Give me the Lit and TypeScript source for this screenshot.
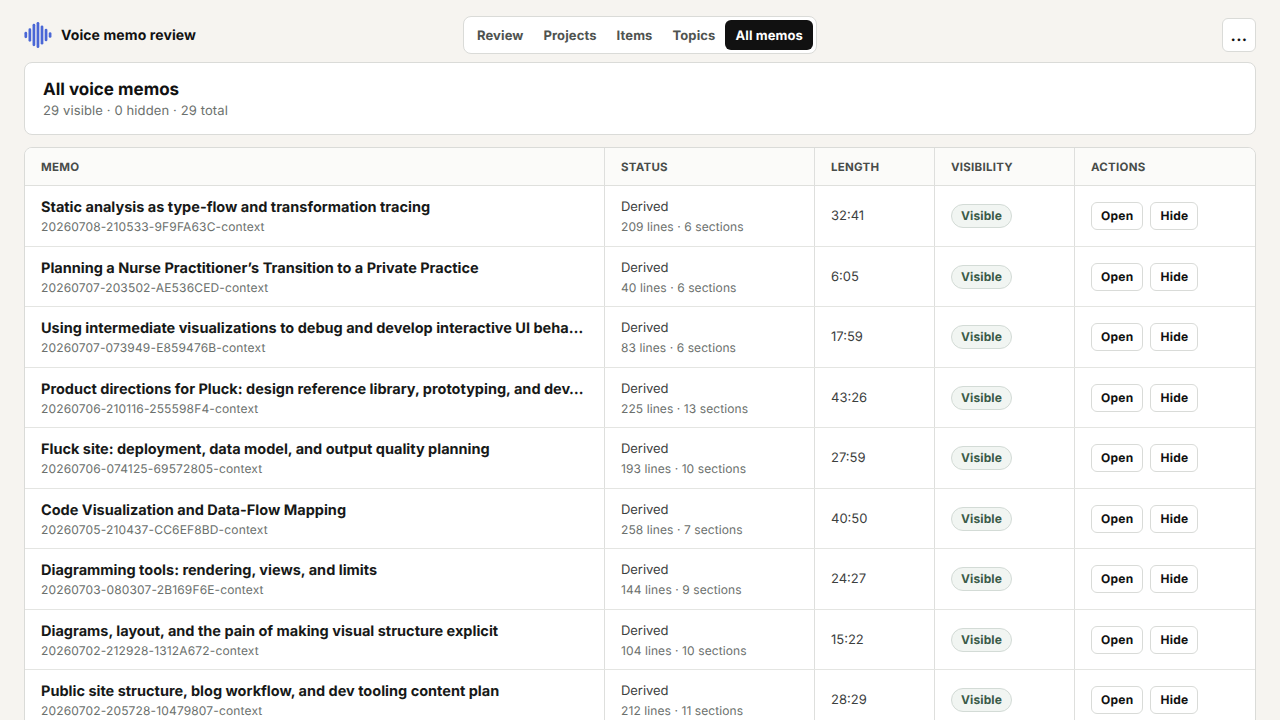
import { LitElement, html, css, svg } from "lit";
import { customElement, property } from "lit/decorators.js";

interface Memo {
  title: string;
  id: string;
  lines: number;
  sections: number;
  length: string;
}

const MEMOS: Memo[] = [
  { title: "Static analysis as type-flow and transformation tracing", id: "20260708-210533-9F9FA63C-context", lines: 209, sections: 6, length: "32:41" },
  { title: "Planning a Nurse Practitioner’s Transition to a Private Practice", id: "20260707-203502-AE536CED-context", lines: 40, sections: 6, length: "6:05" },
  { title: "Using intermediate visualizations to debug and develop interactive UI beha…", id: "20260707-073949-E859476B-context", lines: 83, sections: 6, length: "17:59" },
  { title: "Product directions for Pluck: design reference library, prototyping, and dev…", id: "20260706-210116-255598F4-context", lines: 225, sections: 13, length: "43:26" },
  { title: "Fluck site: deployment, data model, and output quality planning", id: "20260706-074125-69572805-context", lines: 193, sections: 10, length: "27:59" },
  { title: "Code Visualization and Data-Flow Mapping", id: "20260705-210437-CC6EF8BD-context", lines: 258, sections: 7, length: "40:50" },
  { title: "Diagramming tools: rendering, views, and limits", id: "20260703-080307-2B169F6E-context", lines: 144, sections: 9, length: "24:27" },
  { title: "Diagrams, layout, and the pain of making visual structure explicit", id: "20260702-212928-1312A672-context", lines: 104, sections: 10, length: "15:22" },
  { title: "Public site structure, blog workflow, and dev tooling content plan", id: "20260702-205728-10479807-context", lines: 212, sections: 11, length: "28:29" },
];

const TABS = ["Review", "Projects", "Items", "Topics", "All memos"];
const COLUMNS = ["Memo", "Status", "Length", "Visibility", "Actions"];

/* Half-height of each bar of the waveform mark. */
const BARS = [3.2, 6.7, 11.2, 13, 9.6, 6.3, 2.8];

@customElement("memo-row")
export class MemoRow extends LitElement {
  @property({ attribute: false }) memo!: Memo;

  static styles = css`
    :host {
      display: grid;
      grid-template-columns: 580px 210px 120px 140px 1fr;
      height: 60.5px;
      box-sizing: border-box;
      border-bottom: 1px solid #e4e5e2;
    }
    .cell {
      display: flex;
      flex-direction: column;
      justify-content: center;
      min-width: 0;
      padding: 0.5px 16px 0;
      border-right: 1px solid #dedfdd;
      font-size: 13px;
      color: #3c403e;
    }
    .cell:last-child { border-right: 0; }
    .title {
      font-size: 14.5px;
      font-weight: 700;
      line-height: 21px;
      color: #171918;
      white-space: nowrap;
    }
    .main { line-height: 21px; letter-spacing: -0.05px; }
    .sub {
      font-size: 12px;
      line-height: 17px;
      color: #6b706d;
      white-space: nowrap;
      letter-spacing: 0.09px;
    }
    .title + .sub { letter-spacing: 0.15px; }
    .pill {
      align-self: flex-start;
      box-sizing: border-box;
      height: 24px;
      padding: 0 9px;
      border: 1px solid #d3dbd6;
      border-radius: 12px;
      background: #f1f5f2;
      color: #3b5b48;
      font-size: 12px;
      font-weight: 700;
      line-height: 22px;
      letter-spacing: 0.12px;
    }
    .actions {
      flex-direction: row;
      align-items: center;
      justify-content: flex-start;
      gap: 7px;
    }
    button {
      box-sizing: border-box;
      height: 28px;
      margin: 0;
      padding: 0 9px;
      border: 1px solid #d9dbd8;
      border-radius: 6px;
      background: #fff;
      color: #111;
      font: 700 12px/26px Inter, sans-serif;
      text-rendering: inherit;
      letter-spacing: 0.25px;
    }
  `;

  render() {
    const m = this.memo;
    return html`
      <div class="cell">
        <div class="title">${m.title}</div>
        <div class="sub">${m.id}</div>
      </div>
      <div class="cell">
        <div class="main">Derived</div>
        <div class="sub">${m.lines} lines · ${m.sections} sections</div>
      </div>
      <div class="cell">${m.length}</div>
      <div class="cell"><span class="pill">Visible</span></div>
      <div class="cell actions"><button>Open</button><button>Hide</button></div>
    `;
  }
}

@customElement("app-root")
export class AppRoot extends LitElement {
  static styles = css`
    :host {
      display: block;
      box-sizing: border-box;
      height: 720px;
      overflow: hidden;
      padding: 0 24px;
      background: #f6f4f0;
      color: #111;
      font-family: Inter, sans-serif;
      text-rendering: geometricPrecision;
    }
    header {
      display: grid;
      grid-template-columns: 1fr auto 1fr;
      align-items: center;
      padding: 16px 0 8px;
    }
    .brand {
      display: flex;
      align-items: center;
      gap: 9px;
      font-size: 14px;
      font-weight: 700;
      line-height: 20px;
      letter-spacing: 0.1px;
    }
    .brand span { padding-top: 1px; }
    .mark { display: block; width: 28px; height: 28px; }
    nav {
      display: flex;
      box-sizing: border-box;
      height: 38px;
      padding: 3px;
      border: 1px solid #dadbd8;
      border-radius: 8px;
      background: #fff;
    }
    .tab {
      box-sizing: border-box;
      height: 30px;
      padding: 1px 10px 0;
      border-radius: 6px;
      color: #4f5350;
      font-size: 13px;
      font-weight: 700;
      line-height: 30px;
      letter-spacing: 0.11px;
    }
    .tab.on { background: #111; color: #fff; }
    .more {
      justify-self: end;
      box-sizing: border-box;
      width: 34px;
      height: 34px;
      margin: 0;
      padding: 0;
      border: 1px solid #dadbd8;
      border-radius: 6px;
      background: #fff;
      color: #111;
      font: 700 16px/32px Inter, sans-serif;
      text-rendering: inherit;
      letter-spacing: 0.3px;
    }
    .summary {
      box-sizing: border-box;
      height: 73px;
      padding: 17px 18px 0;
      border: 1px solid #dadbd8;
      border-radius: 8px;
      background: #fff;
    }
    h1 { margin: 0; font-size: 17px; font-weight: 700; line-height: 21px; }
    .counts { font-size: 13px; line-height: 20px; color: #6b706d; letter-spacing: 0.12px; }
    .table {
      margin-top: 12px;
      overflow: hidden;
      border: 1px solid #dadbd8;
      border-radius: 8px;
      background: #fff;
    }
    .head {
      display: grid;
      grid-template-columns: 580px 210px 120px 140px 1fr;
      box-sizing: border-box;
      height: 38.4px;
      border-bottom: 1px solid #dfe0dd;
      background: #fbfbf9;
    }
    .th {
      padding: 0 16px;
      border-right: 1px solid #dedfdd;
      color: #484c49;
      font-size: 11.5px;
      font-weight: 700;
      line-height: 38px;
      letter-spacing: 0.25px;
      text-transform: uppercase;
    }
    .th:last-child { border-right: 0; }
  `;

  render() {
    return html`
      <header>
        <div class="brand">
          <svg class="mark" viewBox="0 0 28 28" fill="none" stroke="#4a67d6" stroke-width="2.7" stroke-linecap="round">
            ${BARS.map((h, i) => svg`<line x1=${1.8 + i * 4.05} x2=${1.8 + i * 4.05} y1=${14 - h + 1.35} y2=${14 + h - 1.35} />`)}
          </svg>
          <span>Voice memo review</span>
        </div>
        <nav>${TABS.map((t) => html`<span class="tab ${t === "All memos" ? "on" : ""}">${t}</span>`)}</nav>
        <button class="more">...</button>
      </header>
      <section class="summary">
        <h1>All voice memos</h1>
        <div class="counts">29 visible · 0 hidden · 29 total</div>
      </section>
      <section class="table">
        <div class="head">${COLUMNS.map((c) => html`<div class="th">${c}</div>`)}</div>
        ${MEMOS.map((m) => html`<memo-row .memo=${m}></memo-row>`)}
      </section>
    `;
  }
}
